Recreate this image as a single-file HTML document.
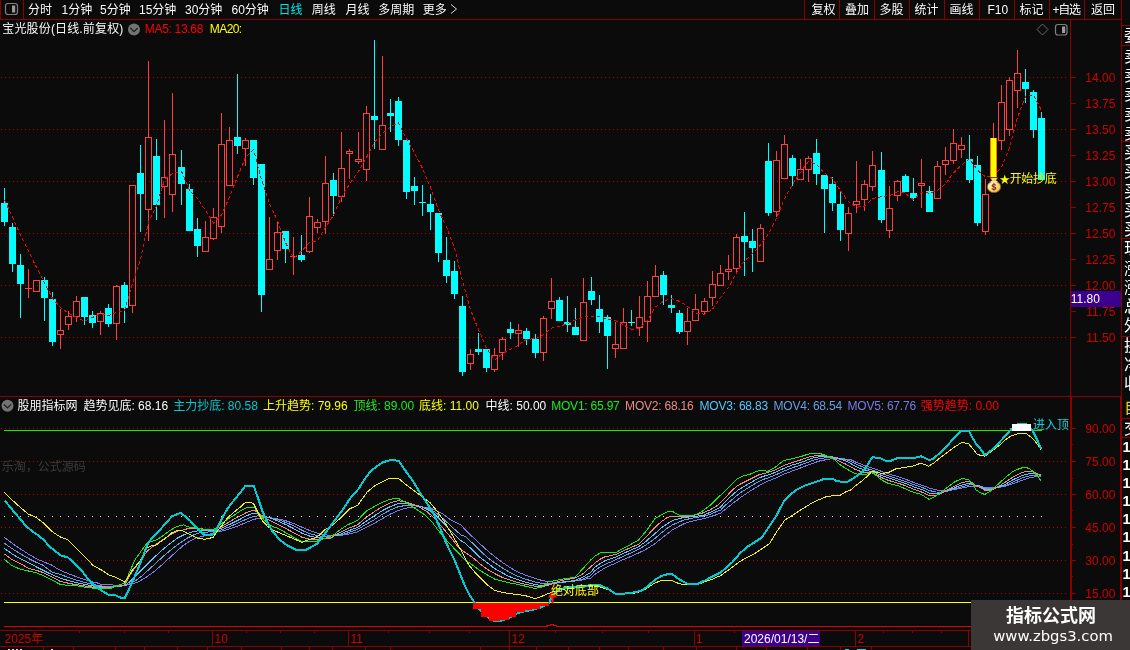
<!DOCTYPE html><html><head><meta charset="utf-8"><title>chart</title>
<style>html,body{margin:0;padding:0;background:#0b0b0b;overflow:hidden}svg{display:block;will-change:transform}text{font-family:"Liberation Sans","Noto Sans CJK SC",sans-serif;white-space:pre}</style></head><body>
<svg width="1130" height="650" viewBox="0 0 1130 650">
<rect width="1130" height="650" fill="#0b0b0b"/>
<g shape-rendering="crispEdges">
<rect x="0" y="0" width="1" height="20" fill="#8c0000"/>
<rect x="23" y="0" width="1" height="20" fill="#8c0000"/>
<rect x="0" y="19" width="1122" height="1" fill="#8c0000"/>
<rect x="804" y="0" width="1" height="20" fill="#8c0000"/>
<rect x="839" y="0" width="1" height="20" fill="#8c0000"/>
<rect x="874" y="0" width="1" height="20" fill="#8c0000"/>
<rect x="909" y="0" width="1" height="20" fill="#8c0000"/>
<rect x="944" y="0" width="1" height="20" fill="#8c0000"/>
<rect x="979" y="0" width="1" height="20" fill="#8c0000"/>
<rect x="1014" y="0" width="1" height="20" fill="#8c0000"/>
<rect x="1049" y="0" width="1" height="20" fill="#8c0000"/>
<rect x="1084" y="0" width="1" height="20" fill="#8c0000"/>
<rect x="1121" y="0" width="1" height="397" fill="#8c0000"/>
<rect x="1120" y="397" width="2" height="253" fill="#8c0000"/>
<rect x="1070" y="20" width="1" height="377" fill="#8c0000"/>
<rect x="1070" y="397" width="2" height="234" fill="#8c0000"/>
<rect x="0" y="396" width="1122" height="1" fill="#8c0000"/>
<rect x="0" y="630" width="1071" height="1" fill="#8c0000"/>
<rect x="0" y="646" width="1122" height="1" fill="#8c0000"/>
<rect x="1121" y="25" width="9" height="1" fill="#8c0000"/>
<rect x="1121" y="45" width="9" height="1" fill="#8c0000"/>
<rect x="1121" y="141" width="9" height="1" fill="#8c0000"/>
<rect x="1121" y="238" width="9" height="1" fill="#8c0000"/>
<rect x="1121" y="336" width="9" height="1" fill="#8c0000"/>
<rect x="1121" y="418" width="9" height="1" fill="#8c0000"/>
<rect x="1121" y="437" width="9" height="1" fill="#8c0000"/>
</g>
<g stroke="#b00000" stroke-width="1" stroke-dasharray="1 3" shape-rendering="crispEdges">
<line x1="1" x2="1067" y1="77.5" y2="77.5"/>
<line x1="1" x2="1067" y1="129.5" y2="129.5"/>
<line x1="1" x2="1067" y1="181.5" y2="181.5"/>
<line x1="1" x2="1067" y1="233.5" y2="233.5"/>
<line x1="1" x2="1067" y1="285.5" y2="285.5"/>
<line x1="1" x2="1067" y1="337.5" y2="337.5"/>
<line x1="1" x2="1067" y1="428.5" y2="428.5"/>
<line x1="1" x2="1067" y1="461.5" y2="461.5"/>
<line x1="1" x2="1067" y1="494.5" y2="494.5"/>
<line x1="1" x2="1067" y1="527.5" y2="527.5"/>
<line x1="1" x2="1067" y1="560.5" y2="560.5"/>
<line x1="1" x2="1067" y1="593.5" y2="593.5"/>
</g>
<g shape-rendering="crispEdges" fill="#e8e8e8"><rect x="4" y="516" width="1" height="1"/><rect x="12" y="516" width="1" height="1"/><rect x="20" y="516" width="1" height="1"/><rect x="28" y="516" width="1" height="1"/><rect x="36" y="516" width="1" height="1"/><rect x="44" y="516" width="1" height="1"/><rect x="52" y="516" width="1" height="1"/><rect x="60" y="516" width="1" height="1"/><rect x="68" y="516" width="1" height="1"/><rect x="76" y="516" width="1" height="1"/><rect x="84" y="516" width="1" height="1"/><rect x="92" y="516" width="1" height="1"/><rect x="100" y="516" width="1" height="1"/><rect x="108" y="516" width="1" height="1"/><rect x="116" y="516" width="1" height="1"/><rect x="124" y="516" width="1" height="1"/><rect x="132" y="516" width="1" height="1"/><rect x="140" y="516" width="1" height="1"/><rect x="148" y="516" width="1" height="1"/><rect x="156" y="516" width="1" height="1"/><rect x="164" y="516" width="1" height="1"/><rect x="172" y="516" width="1" height="1"/><rect x="181" y="516" width="1" height="1"/><rect x="189" y="516" width="1" height="1"/><rect x="197" y="516" width="1" height="1"/><rect x="205" y="516" width="1" height="1"/><rect x="213" y="516" width="1" height="1"/><rect x="221" y="516" width="1" height="1"/><rect x="229" y="516" width="1" height="1"/><rect x="237" y="516" width="1" height="1"/><rect x="245" y="516" width="1" height="1"/><rect x="253" y="516" width="1" height="1"/><rect x="261" y="516" width="1" height="1"/><rect x="269" y="516" width="1" height="1"/><rect x="277" y="516" width="1" height="1"/><rect x="285" y="516" width="1" height="1"/><rect x="293" y="516" width="1" height="1"/><rect x="301" y="516" width="1" height="1"/><rect x="309" y="516" width="1" height="1"/><rect x="317" y="516" width="1" height="1"/><rect x="325" y="516" width="1" height="1"/><rect x="333" y="516" width="1" height="1"/><rect x="341" y="516" width="1" height="1"/><rect x="349" y="516" width="1" height="1"/><rect x="358" y="516" width="1" height="1"/><rect x="366" y="516" width="1" height="1"/><rect x="374" y="516" width="1" height="1"/><rect x="382" y="516" width="1" height="1"/><rect x="390" y="516" width="1" height="1"/><rect x="398" y="516" width="1" height="1"/><rect x="406" y="516" width="1" height="1"/><rect x="414" y="516" width="1" height="1"/><rect x="422" y="516" width="1" height="1"/><rect x="430" y="516" width="1" height="1"/><rect x="438" y="516" width="1" height="1"/><rect x="446" y="516" width="1" height="1"/><rect x="454" y="516" width="1" height="1"/><rect x="462" y="516" width="1" height="1"/><rect x="470" y="516" width="1" height="1"/><rect x="478" y="516" width="1" height="1"/><rect x="486" y="516" width="1" height="1"/><rect x="494" y="516" width="1" height="1"/><rect x="502" y="516" width="1" height="1"/><rect x="510" y="516" width="1" height="1"/><rect x="518" y="516" width="1" height="1"/><rect x="526" y="516" width="1" height="1"/><rect x="535" y="516" width="1" height="1"/><rect x="543" y="516" width="1" height="1"/><rect x="551" y="516" width="1" height="1"/><rect x="559" y="516" width="1" height="1"/><rect x="567" y="516" width="1" height="1"/><rect x="575" y="516" width="1" height="1"/><rect x="583" y="516" width="1" height="1"/><rect x="591" y="516" width="1" height="1"/><rect x="599" y="516" width="1" height="1"/><rect x="607" y="516" width="1" height="1"/><rect x="615" y="516" width="1" height="1"/><rect x="623" y="516" width="1" height="1"/><rect x="631" y="516" width="1" height="1"/><rect x="639" y="516" width="1" height="1"/><rect x="647" y="516" width="1" height="1"/><rect x="655" y="516" width="1" height="1"/><rect x="663" y="516" width="1" height="1"/><rect x="671" y="516" width="1" height="1"/><rect x="679" y="516" width="1" height="1"/><rect x="687" y="516" width="1" height="1"/><rect x="695" y="516" width="1" height="1"/><rect x="704" y="516" width="1" height="1"/><rect x="712" y="516" width="1" height="1"/><rect x="720" y="516" width="1" height="1"/><rect x="728" y="516" width="1" height="1"/><rect x="736" y="516" width="1" height="1"/><rect x="744" y="516" width="1" height="1"/><rect x="752" y="516" width="1" height="1"/><rect x="760" y="516" width="1" height="1"/><rect x="768" y="516" width="1" height="1"/><rect x="776" y="516" width="1" height="1"/><rect x="784" y="516" width="1" height="1"/><rect x="792" y="516" width="1" height="1"/><rect x="800" y="516" width="1" height="1"/><rect x="808" y="516" width="1" height="1"/><rect x="816" y="516" width="1" height="1"/><rect x="824" y="516" width="1" height="1"/><rect x="832" y="516" width="1" height="1"/><rect x="840" y="516" width="1" height="1"/><rect x="848" y="516" width="1" height="1"/><rect x="856" y="516" width="1" height="1"/><rect x="864" y="516" width="1" height="1"/><rect x="872" y="516" width="1" height="1"/><rect x="881" y="516" width="1" height="1"/><rect x="889" y="516" width="1" height="1"/><rect x="897" y="516" width="1" height="1"/><rect x="905" y="516" width="1" height="1"/><rect x="913" y="516" width="1" height="1"/><rect x="921" y="516" width="1" height="1"/><rect x="929" y="516" width="1" height="1"/><rect x="937" y="516" width="1" height="1"/><rect x="945" y="516" width="1" height="1"/><rect x="953" y="516" width="1" height="1"/><rect x="961" y="516" width="1" height="1"/><rect x="969" y="516" width="1" height="1"/><rect x="977" y="516" width="1" height="1"/><rect x="985" y="516" width="1" height="1"/><rect x="993" y="516" width="1" height="1"/><rect x="1001" y="516" width="1" height="1"/><rect x="1009" y="516" width="1" height="1"/><rect x="1017" y="516" width="1" height="1"/><rect x="1025" y="516" width="1" height="1"/><rect x="1033" y="516" width="1" height="1"/><rect x="1041" y="516" width="1" height="1"/></g>
<g shape-rendering="crispEdges">
<rect x="1071" y="77" width="5" height="1" fill="#8c0000"/>
<rect x="1071" y="103" width="5" height="1" fill="#8c0000"/>
<rect x="1071" y="129" width="5" height="1" fill="#8c0000"/>
<rect x="1071" y="155" width="5" height="1" fill="#8c0000"/>
<rect x="1071" y="181" width="5" height="1" fill="#8c0000"/>
<rect x="1071" y="207" width="5" height="1" fill="#8c0000"/>
<rect x="1071" y="233" width="5" height="1" fill="#8c0000"/>
<rect x="1071" y="259" width="5" height="1" fill="#8c0000"/>
<rect x="1071" y="285" width="5" height="1" fill="#8c0000"/>
<rect x="1071" y="311" width="5" height="1" fill="#8c0000"/>
<rect x="1071" y="337" width="5" height="1" fill="#8c0000"/>
</g>
<text x="1115.4" y="81.5" fill="#d00000" font-size="12" text-anchor="end" >14.00</text>
<text x="1115.4" y="107.5" fill="#d00000" font-size="12" text-anchor="end" >13.75</text>
<text x="1115.4" y="133.5" fill="#d00000" font-size="12" text-anchor="end" >13.50</text>
<text x="1115.4" y="159.5" fill="#d00000" font-size="12" text-anchor="end" >13.25</text>
<text x="1115.4" y="185.5" fill="#d00000" font-size="12" text-anchor="end" >13.00</text>
<text x="1115.4" y="211.5" fill="#d00000" font-size="12" text-anchor="end" >12.75</text>
<text x="1115.4" y="237.5" fill="#d00000" font-size="12" text-anchor="end" >12.50</text>
<text x="1115.4" y="263.5" fill="#d00000" font-size="12" text-anchor="end" >12.25</text>
<text x="1115.4" y="289.5" fill="#d00000" font-size="12" text-anchor="end" >12.00</text>
<text x="1115.4" y="315.5" fill="#d00000" font-size="12" text-anchor="end" >11.75</text>
<text x="1115.4" y="341.5" fill="#d00000" font-size="12" text-anchor="end" >11.50</text>
<rect x="1071" y="291" width="50" height="16" fill="#3c0090" shape-rendering="crispEdges"/>
<text x="1070.8" y="303" fill="#ffffff" font-size="12" text-anchor="start" >11.80</text>
<g shape-rendering="crispEdges">
<rect x="1072" y="428" width="4" height="1" fill="#8c0000"/>
<rect x="1072" y="444" width="1" height="1" fill="#8c0000"/>
<rect x="1072" y="461" width="4" height="1" fill="#8c0000"/>
<rect x="1072" y="478" width="1" height="1" fill="#8c0000"/>
<rect x="1072" y="494" width="4" height="1" fill="#8c0000"/>
<rect x="1072" y="510" width="1" height="1" fill="#8c0000"/>
<rect x="1072" y="527" width="4" height="1" fill="#8c0000"/>
<rect x="1072" y="544" width="1" height="1" fill="#8c0000"/>
<rect x="1072" y="560" width="4" height="1" fill="#8c0000"/>
<rect x="1072" y="576" width="1" height="1" fill="#8c0000"/>
<rect x="1072" y="593" width="4" height="1" fill="#8c0000"/>
<rect x="1072" y="610" width="1" height="1" fill="#8c0000"/>
<rect x="1072" y="626" width="4" height="1" fill="#8c0000"/>
</g>
<text x="1115.4" y="432.5" fill="#d00000" font-size="12" text-anchor="end" >90.00</text>
<text x="1115.4" y="465.5" fill="#d00000" font-size="12" text-anchor="end" >75.00</text>
<text x="1115.4" y="498.5" fill="#d00000" font-size="12" text-anchor="end" >60.00</text>
<text x="1115.4" y="531.5" fill="#d00000" font-size="12" text-anchor="end" >45.00</text>
<text x="1115.4" y="564.5" fill="#d00000" font-size="12" text-anchor="end" >30.00</text>
<text x="1115.4" y="597.5" fill="#d00000" font-size="12" text-anchor="end" >15.00</text>
<g shape-rendering="crispEdges">
<rect x="4" y="188" width="1" height="38" fill="#00ffff"/>
<rect x="1" y="203" width="7" height="19" fill="#00ffff"/>
<rect x="12" y="223" width="1" height="49" fill="#00ffff"/>
<rect x="9" y="227" width="7" height="37" fill="#00ffff"/>
<rect x="20" y="254" width="1" height="64" fill="#00ffff"/>
<rect x="17" y="265" width="7" height="19" fill="#00ffff"/>
<rect x="28" y="269" width="1" height="19" fill="#ff4040"/>
<rect x="28" y="289" width="1" height="9" fill="#ff4040"/>
<rect x="25" y="288" width="7" height="1" fill="#ff4040"/>
<rect x="33.5" y="280.5" width="6" height="11" fill="none" stroke="#ff4040" stroke-width="1"/>
<rect x="44" y="277" width="1" height="44" fill="#00ffff"/>
<rect x="41" y="280" width="7" height="18" fill="#00ffff"/>
<rect x="52" y="292" width="1" height="54" fill="#00ffff"/>
<rect x="49" y="299" width="7" height="43" fill="#00ffff"/>
<rect x="60" y="309" width="1" height="21" fill="#ff4040"/>
<rect x="60" y="335" width="1" height="14" fill="#ff4040"/>
<rect x="57.5" y="330.5" width="6" height="4" fill="none" stroke="#ff4040" stroke-width="1"/>
<rect x="68" y="311" width="1" height="5" fill="#ff4040"/>
<rect x="68" y="325" width="1" height="5" fill="#ff4040"/>
<rect x="65.5" y="316.5" width="6" height="8" fill="none" stroke="#ff4040" stroke-width="1"/>
<rect x="76" y="296" width="1" height="5" fill="#ff4040"/>
<rect x="76" y="317" width="1" height="5" fill="#ff4040"/>
<rect x="73.5" y="301.5" width="6" height="15" fill="none" stroke="#ff4040" stroke-width="1"/>
<rect x="84" y="297" width="1" height="28" fill="#00ffff"/>
<rect x="81" y="297" width="7" height="20" fill="#00ffff"/>
<rect x="92" y="311" width="1" height="17" fill="#00ffff"/>
<rect x="89" y="315" width="7" height="8" fill="#00ffff"/>
<rect x="100" y="311" width="1" height="2" fill="#ff4040"/>
<rect x="100" y="322" width="1" height="13" fill="#ff4040"/>
<rect x="97.5" y="313.5" width="6" height="8" fill="none" stroke="#ff4040" stroke-width="1"/>
<rect x="108" y="304" width="1" height="23" fill="#00ffff"/>
<rect x="105" y="308" width="7" height="16" fill="#00ffff"/>
<rect x="116" y="285" width="1" height="1" fill="#ff4040"/>
<rect x="116" y="324" width="1" height="16" fill="#ff4040"/>
<rect x="113.5" y="286.5" width="6" height="37" fill="none" stroke="#ff4040" stroke-width="1"/>
<rect x="124" y="282" width="1" height="41" fill="#00ffff"/>
<rect x="121" y="285" width="7" height="23" fill="#00ffff"/>
<rect x="132" y="306" width="1" height="7" fill="#ff4040"/>
<rect x="129.5" y="185.5" width="6" height="120" fill="none" stroke="#ff4040" stroke-width="1"/>
<rect x="140" y="145" width="1" height="87" fill="#00ffff"/>
<rect x="137" y="173" width="7" height="21" fill="#00ffff"/>
<rect x="148" y="61" width="1" height="76" fill="#ff4040"/>
<rect x="148" y="210" width="1" height="31" fill="#ff4040"/>
<rect x="145.5" y="137.5" width="6" height="72" fill="none" stroke="#ff4040" stroke-width="1"/>
<rect x="156" y="139" width="1" height="81" fill="#00ffff"/>
<rect x="153" y="156" width="7" height="49" fill="#00ffff"/>
<rect x="164" y="120" width="1" height="57" fill="#ff4040"/>
<rect x="164" y="187" width="1" height="31" fill="#ff4040"/>
<rect x="161.5" y="177.5" width="6" height="9" fill="none" stroke="#ff4040" stroke-width="1"/>
<rect x="172" y="93" width="1" height="61" fill="#ff4040"/>
<rect x="172" y="195" width="1" height="17" fill="#ff4040"/>
<rect x="169.5" y="154.5" width="6" height="40" fill="none" stroke="#ff4040" stroke-width="1"/>
<rect x="181" y="150" width="1" height="55" fill="#00ffff"/>
<rect x="178" y="167" width="7" height="17" fill="#00ffff"/>
<rect x="189" y="184" width="1" height="47" fill="#00ffff"/>
<rect x="186" y="189" width="7" height="42" fill="#00ffff"/>
<rect x="197" y="218" width="1" height="39" fill="#00ffff"/>
<rect x="194" y="229" width="7" height="17" fill="#00ffff"/>
<rect x="205" y="221" width="1" height="16" fill="#ff4040"/>
<rect x="202.5" y="237.5" width="6" height="14" fill="none" stroke="#ff4040" stroke-width="1"/>
<rect x="213" y="208" width="1" height="9" fill="#ff4040"/>
<rect x="213" y="239" width="1" height="1" fill="#ff4040"/>
<rect x="210.5" y="217.5" width="6" height="21" fill="none" stroke="#ff4040" stroke-width="1"/>
<rect x="221" y="113" width="1" height="31" fill="#ff4040"/>
<rect x="221" y="227" width="1" height="6" fill="#ff4040"/>
<rect x="218.5" y="144.5" width="6" height="82" fill="none" stroke="#ff4040" stroke-width="1"/>
<rect x="229" y="127" width="1" height="13" fill="#ff4040"/>
<rect x="226.5" y="140.5" width="6" height="45" fill="none" stroke="#ff4040" stroke-width="1"/>
<rect x="237" y="74" width="1" height="80" fill="#00ffff"/>
<rect x="234" y="137" width="7" height="9" fill="#00ffff"/>
<rect x="245" y="138" width="1" height="2" fill="#ff4040"/>
<rect x="245" y="149" width="1" height="17" fill="#ff4040"/>
<rect x="242.5" y="140.5" width="6" height="8" fill="none" stroke="#ff4040" stroke-width="1"/>
<rect x="253" y="140" width="1" height="45" fill="#00ffff"/>
<rect x="250" y="140" width="7" height="38" fill="#00ffff"/>
<rect x="261" y="164" width="1" height="148" fill="#00ffff"/>
<rect x="258" y="164" width="7" height="131" fill="#00ffff"/>
<rect x="269" y="217" width="1" height="42" fill="#ff4040"/>
<rect x="266.5" y="259.5" width="6" height="10" fill="none" stroke="#ff4040" stroke-width="1"/>
<rect x="277" y="222" width="1" height="10" fill="#ff4040"/>
<rect x="277" y="251" width="1" height="9" fill="#ff4040"/>
<rect x="274.5" y="232.5" width="6" height="18" fill="none" stroke="#ff4040" stroke-width="1"/>
<rect x="285" y="231" width="1" height="32" fill="#00ffff"/>
<rect x="282" y="231" width="7" height="18" fill="#00ffff"/>
<rect x="293" y="237" width="1" height="19" fill="#ff4040"/>
<rect x="293" y="257" width="1" height="18" fill="#ff4040"/>
<rect x="290" y="256" width="7" height="1" fill="#ff4040"/>
<rect x="301" y="235" width="1" height="27" fill="#00ffff"/>
<rect x="298" y="255" width="7" height="5" fill="#00ffff"/>
<rect x="309" y="197" width="1" height="19" fill="#ff4040"/>
<rect x="309" y="252" width="1" height="1" fill="#ff4040"/>
<rect x="306.5" y="216.5" width="6" height="35" fill="none" stroke="#ff4040" stroke-width="1"/>
<rect x="317" y="219" width="1" height="3" fill="#ff4040"/>
<rect x="317" y="228" width="1" height="5" fill="#ff4040"/>
<rect x="314.5" y="222.5" width="6" height="5" fill="none" stroke="#ff4040" stroke-width="1"/>
<rect x="325" y="156" width="1" height="27" fill="#ff4040"/>
<rect x="325" y="222" width="1" height="12" fill="#ff4040"/>
<rect x="322.5" y="183.5" width="6" height="38" fill="none" stroke="#ff4040" stroke-width="1"/>
<rect x="333" y="173" width="1" height="43" fill="#00ffff"/>
<rect x="330" y="180" width="7" height="16" fill="#00ffff"/>
<rect x="341" y="132" width="1" height="36" fill="#ff4040"/>
<rect x="341" y="197" width="1" height="5" fill="#ff4040"/>
<rect x="338.5" y="168.5" width="6" height="28" fill="none" stroke="#ff4040" stroke-width="1"/>
<rect x="349" y="149" width="1" height="2" fill="#ff4040"/>
<rect x="349" y="154" width="1" height="25" fill="#ff4040"/>
<rect x="346.5" y="151.5" width="6" height="2" fill="none" stroke="#ff4040" stroke-width="1"/>
<rect x="358" y="132" width="1" height="27" fill="#ff4040"/>
<rect x="358" y="162" width="1" height="2" fill="#ff4040"/>
<rect x="355.5" y="159.5" width="6" height="2" fill="none" stroke="#ff4040" stroke-width="1"/>
<rect x="366" y="106" width="1" height="7" fill="#ff4040"/>
<rect x="366" y="170" width="1" height="11" fill="#ff4040"/>
<rect x="363.5" y="113.5" width="6" height="56" fill="none" stroke="#ff4040" stroke-width="1"/>
<rect x="374" y="40" width="1" height="109" fill="#00ffff"/>
<rect x="371" y="116" width="7" height="4" fill="#00ffff"/>
<rect x="382" y="56" width="1" height="69" fill="#ff4040"/>
<rect x="379.5" y="125.5" width="6" height="24" fill="none" stroke="#ff4040" stroke-width="1"/>
<rect x="390" y="99" width="1" height="33" fill="#00ffff"/>
<rect x="387" y="113" width="7" height="3" fill="#00ffff"/>
<rect x="398" y="97" width="1" height="49" fill="#00ffff"/>
<rect x="395" y="101" width="7" height="39" fill="#00ffff"/>
<rect x="406" y="140" width="1" height="59" fill="#00ffff"/>
<rect x="403" y="140" width="7" height="52" fill="#00ffff"/>
<rect x="414" y="177" width="1" height="28" fill="#00ffff"/>
<rect x="411" y="186" width="7" height="5" fill="#00ffff"/>
<rect x="422" y="185" width="1" height="31" fill="#00ffff"/>
<rect x="419" y="202" width="7" height="1" fill="#00ffff"/>
<rect x="430" y="194" width="1" height="36" fill="#00ffff"/>
<rect x="427" y="204" width="7" height="8" fill="#00ffff"/>
<rect x="438" y="213" width="1" height="49" fill="#00ffff"/>
<rect x="435" y="213" width="7" height="40" fill="#00ffff"/>
<rect x="446" y="237" width="1" height="46" fill="#00ffff"/>
<rect x="443" y="260" width="7" height="16" fill="#00ffff"/>
<rect x="454" y="261" width="1" height="38" fill="#00ffff"/>
<rect x="451" y="271" width="7" height="23" fill="#00ffff"/>
<rect x="462" y="296" width="1" height="80" fill="#00ffff"/>
<rect x="459" y="306" width="7" height="66" fill="#00ffff"/>
<rect x="470" y="349" width="1" height="5" fill="#ff4040"/>
<rect x="470" y="364" width="1" height="6" fill="#ff4040"/>
<rect x="467.5" y="354.5" width="6" height="9" fill="none" stroke="#ff4040" stroke-width="1"/>
<rect x="478" y="333" width="1" height="22" fill="#00ffff"/>
<rect x="475" y="349" width="7" height="3" fill="#00ffff"/>
<rect x="486" y="349" width="1" height="23" fill="#00ffff"/>
<rect x="483" y="349" width="7" height="19" fill="#00ffff"/>
<rect x="494" y="348" width="1" height="7" fill="#ff4040"/>
<rect x="494" y="370" width="1" height="2" fill="#ff4040"/>
<rect x="491.5" y="355.5" width="6" height="14" fill="none" stroke="#ff4040" stroke-width="1"/>
<rect x="502" y="337" width="1" height="2" fill="#ff4040"/>
<rect x="502" y="353" width="1" height="7" fill="#ff4040"/>
<rect x="499.5" y="339.5" width="6" height="13" fill="none" stroke="#ff4040" stroke-width="1"/>
<rect x="510" y="322" width="1" height="17" fill="#00ffff"/>
<rect x="507" y="329" width="7" height="4" fill="#00ffff"/>
<rect x="518" y="324" width="1" height="6" fill="#ff4040"/>
<rect x="518" y="334" width="1" height="13" fill="#ff4040"/>
<rect x="515.5" y="330.5" width="6" height="3" fill="none" stroke="#ff4040" stroke-width="1"/>
<rect x="526" y="328" width="1" height="17" fill="#00ffff"/>
<rect x="523" y="331" width="7" height="8" fill="#00ffff"/>
<rect x="535" y="334" width="1" height="24" fill="#00ffff"/>
<rect x="532" y="339" width="7" height="14" fill="#00ffff"/>
<rect x="543" y="316" width="1" height="2" fill="#ff4040"/>
<rect x="543" y="353" width="1" height="8" fill="#ff4040"/>
<rect x="540.5" y="318.5" width="6" height="34" fill="none" stroke="#ff4040" stroke-width="1"/>
<rect x="551" y="278" width="1" height="23" fill="#ff4040"/>
<rect x="551" y="309" width="1" height="10" fill="#ff4040"/>
<rect x="548.5" y="301.5" width="6" height="7" fill="none" stroke="#ff4040" stroke-width="1"/>
<rect x="559" y="297" width="1" height="24" fill="#00ffff"/>
<rect x="556" y="300" width="7" height="21" fill="#00ffff"/>
<rect x="567" y="296" width="1" height="36" fill="#00ffff"/>
<rect x="564" y="322" width="7" height="3" fill="#00ffff"/>
<rect x="575" y="308" width="1" height="27" fill="#00ffff"/>
<rect x="572" y="327" width="7" height="8" fill="#00ffff"/>
<rect x="583" y="278" width="1" height="24" fill="#ff4040"/>
<rect x="580.5" y="302.5" width="6" height="38" fill="none" stroke="#ff4040" stroke-width="1"/>
<rect x="591" y="277" width="1" height="28" fill="#00ffff"/>
<rect x="588" y="291" width="7" height="9" fill="#00ffff"/>
<rect x="599" y="295" width="1" height="38" fill="#00ffff"/>
<rect x="596" y="309" width="7" height="13" fill="#00ffff"/>
<rect x="607" y="315" width="1" height="54" fill="#00ffff"/>
<rect x="604" y="317" width="7" height="19" fill="#00ffff"/>
<rect x="615" y="322" width="1" height="22" fill="#ff4040"/>
<rect x="615" y="349" width="1" height="9" fill="#ff4040"/>
<rect x="612.5" y="344.5" width="6" height="4" fill="none" stroke="#ff4040" stroke-width="1"/>
<rect x="623" y="308" width="1" height="14" fill="#ff4040"/>
<rect x="620.5" y="322.5" width="6" height="26" fill="none" stroke="#ff4040" stroke-width="1"/>
<rect x="631" y="310" width="1" height="16" fill="#00ffff"/>
<rect x="628" y="322" width="7" height="1" fill="#00ffff"/>
<rect x="639" y="296" width="1" height="21" fill="#ff4040"/>
<rect x="639" y="328" width="1" height="8" fill="#ff4040"/>
<rect x="636.5" y="317.5" width="6" height="10" fill="none" stroke="#ff4040" stroke-width="1"/>
<rect x="647" y="281" width="1" height="15" fill="#ff4040"/>
<rect x="647" y="322" width="1" height="20" fill="#ff4040"/>
<rect x="644.5" y="296.5" width="6" height="25" fill="none" stroke="#ff4040" stroke-width="1"/>
<rect x="655" y="265" width="1" height="11" fill="#ff4040"/>
<rect x="652.5" y="276.5" width="6" height="20" fill="none" stroke="#ff4040" stroke-width="1"/>
<rect x="663" y="271" width="1" height="34" fill="#00ffff"/>
<rect x="660" y="275" width="7" height="20" fill="#00ffff"/>
<rect x="671" y="295" width="1" height="18" fill="#00ffff"/>
<rect x="668" y="305" width="7" height="3" fill="#00ffff"/>
<rect x="679" y="310" width="1" height="24" fill="#00ffff"/>
<rect x="676" y="313" width="7" height="19" fill="#00ffff"/>
<rect x="687" y="308" width="1" height="13" fill="#ff4040"/>
<rect x="687" y="332" width="1" height="13" fill="#ff4040"/>
<rect x="684.5" y="321.5" width="6" height="10" fill="none" stroke="#ff4040" stroke-width="1"/>
<rect x="695" y="294" width="1" height="15" fill="#ff4040"/>
<rect x="692.5" y="309.5" width="6" height="11" fill="none" stroke="#ff4040" stroke-width="1"/>
<rect x="704" y="298" width="1" height="3" fill="#ff4040"/>
<rect x="704" y="312" width="1" height="3" fill="#ff4040"/>
<rect x="701.5" y="301.5" width="6" height="10" fill="none" stroke="#ff4040" stroke-width="1"/>
<rect x="712" y="271" width="1" height="13" fill="#ff4040"/>
<rect x="712" y="298" width="1" height="8" fill="#ff4040"/>
<rect x="709.5" y="284.5" width="6" height="13" fill="none" stroke="#ff4040" stroke-width="1"/>
<rect x="720" y="265" width="1" height="8" fill="#ff4040"/>
<rect x="717.5" y="273.5" width="6" height="12" fill="none" stroke="#ff4040" stroke-width="1"/>
<rect x="728" y="255" width="1" height="14" fill="#ff4040"/>
<rect x="728" y="272" width="1" height="8" fill="#ff4040"/>
<rect x="725.5" y="269.5" width="6" height="2" fill="none" stroke="#ff4040" stroke-width="1"/>
<rect x="736" y="234" width="1" height="3" fill="#ff4040"/>
<rect x="736" y="269" width="1" height="3" fill="#ff4040"/>
<rect x="733.5" y="237.5" width="6" height="31" fill="none" stroke="#ff4040" stroke-width="1"/>
<rect x="744" y="212" width="1" height="64" fill="#00ffff"/>
<rect x="741" y="236" width="7" height="6" fill="#00ffff"/>
<rect x="752" y="229" width="1" height="43" fill="#00ffff"/>
<rect x="749" y="241" width="7" height="7" fill="#00ffff"/>
<rect x="760" y="224" width="1" height="4" fill="#ff4040"/>
<rect x="757.5" y="228.5" width="6" height="33" fill="none" stroke="#ff4040" stroke-width="1"/>
<rect x="768" y="143" width="1" height="73" fill="#00ffff"/>
<rect x="765" y="161" width="7" height="52" fill="#00ffff"/>
<rect x="776" y="151" width="1" height="9" fill="#ff4040"/>
<rect x="776" y="212" width="1" height="5" fill="#ff4040"/>
<rect x="773.5" y="160.5" width="6" height="51" fill="none" stroke="#ff4040" stroke-width="1"/>
<rect x="784" y="135" width="1" height="9" fill="#ff4040"/>
<rect x="781.5" y="144.5" width="6" height="34" fill="none" stroke="#ff4040" stroke-width="1"/>
<rect x="792" y="155" width="1" height="31" fill="#00ffff"/>
<rect x="789" y="158" width="7" height="18" fill="#00ffff"/>
<rect x="800" y="159" width="1" height="10" fill="#ff4040"/>
<rect x="797.5" y="169.5" width="6" height="10" fill="none" stroke="#ff4040" stroke-width="1"/>
<rect x="808" y="156" width="1" height="2" fill="#ff4040"/>
<rect x="808" y="170" width="1" height="12" fill="#ff4040"/>
<rect x="805.5" y="158.5" width="6" height="11" fill="none" stroke="#ff4040" stroke-width="1"/>
<rect x="816" y="139" width="1" height="46" fill="#00ffff"/>
<rect x="813" y="153" width="7" height="21" fill="#00ffff"/>
<rect x="824" y="175" width="1" height="58" fill="#00ffff"/>
<rect x="821" y="175" width="7" height="14" fill="#00ffff"/>
<rect x="832" y="177" width="1" height="34" fill="#00ffff"/>
<rect x="829" y="184" width="7" height="19" fill="#00ffff"/>
<rect x="840" y="192" width="1" height="49" fill="#00ffff"/>
<rect x="837" y="204" width="7" height="26" fill="#00ffff"/>
<rect x="848" y="207" width="1" height="6" fill="#ff4040"/>
<rect x="848" y="234" width="1" height="17" fill="#ff4040"/>
<rect x="845.5" y="213.5" width="6" height="20" fill="none" stroke="#ff4040" stroke-width="1"/>
<rect x="856" y="161" width="1" height="40" fill="#ff4040"/>
<rect x="856" y="205" width="1" height="8" fill="#ff4040"/>
<rect x="853.5" y="201.5" width="6" height="3" fill="none" stroke="#ff4040" stroke-width="1"/>
<rect x="864" y="180" width="1" height="4" fill="#ff4040"/>
<rect x="864" y="200" width="1" height="11" fill="#ff4040"/>
<rect x="861.5" y="184.5" width="6" height="15" fill="none" stroke="#ff4040" stroke-width="1"/>
<rect x="872" y="151" width="1" height="14" fill="#ff4040"/>
<rect x="872" y="187" width="1" height="4" fill="#ff4040"/>
<rect x="869.5" y="165.5" width="6" height="21" fill="none" stroke="#ff4040" stroke-width="1"/>
<rect x="881" y="152" width="1" height="71" fill="#00ffff"/>
<rect x="878" y="170" width="7" height="50" fill="#00ffff"/>
<rect x="889" y="186" width="1" height="22" fill="#ff4040"/>
<rect x="889" y="231" width="1" height="7" fill="#ff4040"/>
<rect x="886.5" y="208.5" width="6" height="22" fill="none" stroke="#ff4040" stroke-width="1"/>
<rect x="897" y="180" width="1" height="1" fill="#ff4040"/>
<rect x="897" y="196" width="1" height="5" fill="#ff4040"/>
<rect x="894.5" y="181.5" width="6" height="14" fill="none" stroke="#ff4040" stroke-width="1"/>
<rect x="905" y="174" width="1" height="18" fill="#00ffff"/>
<rect x="902" y="176" width="7" height="16" fill="#00ffff"/>
<rect x="913" y="178" width="1" height="23" fill="#00ffff"/>
<rect x="910" y="193" width="7" height="5" fill="#00ffff"/>
<rect x="921" y="159" width="1" height="24" fill="#ff4040"/>
<rect x="921" y="186" width="1" height="22" fill="#ff4040"/>
<rect x="918.5" y="183.5" width="6" height="2" fill="none" stroke="#ff4040" stroke-width="1"/>
<rect x="929" y="186" width="1" height="26" fill="#00ffff"/>
<rect x="926" y="191" width="7" height="21" fill="#00ffff"/>
<rect x="937" y="161" width="1" height="5" fill="#ff4040"/>
<rect x="934.5" y="166.5" width="6" height="32" fill="none" stroke="#ff4040" stroke-width="1"/>
<rect x="945" y="147" width="1" height="13" fill="#ff4040"/>
<rect x="945" y="165" width="1" height="10" fill="#ff4040"/>
<rect x="942.5" y="160.5" width="6" height="4" fill="none" stroke="#ff4040" stroke-width="1"/>
<rect x="953" y="129" width="1" height="14" fill="#ff4040"/>
<rect x="953" y="161" width="1" height="3" fill="#ff4040"/>
<rect x="950.5" y="143.5" width="6" height="17" fill="none" stroke="#ff4040" stroke-width="1"/>
<rect x="961" y="137" width="1" height="8" fill="#ff4040"/>
<rect x="961" y="150" width="1" height="8" fill="#ff4040"/>
<rect x="958.5" y="145.5" width="6" height="4" fill="none" stroke="#ff4040" stroke-width="1"/>
<rect x="969" y="135" width="1" height="48" fill="#00ffff"/>
<rect x="966" y="159" width="7" height="21" fill="#00ffff"/>
<rect x="977" y="156" width="1" height="70" fill="#00ffff"/>
<rect x="974" y="165" width="7" height="58" fill="#00ffff"/>
<rect x="985" y="179" width="1" height="15" fill="#ff4040"/>
<rect x="985" y="232" width="1" height="3" fill="#ff4040"/>
<rect x="982.5" y="194.5" width="6" height="37" fill="none" stroke="#ff4040" stroke-width="1"/>
<rect x="993" y="123" width="1" height="15" fill="#ff4040"/>
<rect x="990.5" y="138.5" width="6" height="38" fill="none" stroke="#ff4040" stroke-width="1"/>
<rect x="1001" y="85" width="1" height="17" fill="#ff4040"/>
<rect x="1001" y="141" width="1" height="9" fill="#ff4040"/>
<rect x="998.5" y="102.5" width="6" height="38" fill="none" stroke="#ff4040" stroke-width="1"/>
<rect x="1009" y="77" width="1" height="3" fill="#ff4040"/>
<rect x="1009" y="130" width="1" height="6" fill="#ff4040"/>
<rect x="1006.5" y="80.5" width="6" height="49" fill="none" stroke="#ff4040" stroke-width="1"/>
<rect x="1017" y="50" width="1" height="23" fill="#ff4040"/>
<rect x="1017" y="91" width="1" height="17" fill="#ff4040"/>
<rect x="1014.5" y="73.5" width="6" height="17" fill="none" stroke="#ff4040" stroke-width="1"/>
<rect x="1025" y="69" width="1" height="34" fill="#00ffff"/>
<rect x="1022" y="82" width="7" height="7" fill="#00ffff"/>
<rect x="1033" y="90" width="1" height="48" fill="#00ffff"/>
<rect x="1030" y="92" width="7" height="38" fill="#00ffff"/>
<rect x="1041" y="112" width="1" height="68" fill="#00ffff"/>
<rect x="1038" y="118" width="7" height="62" fill="#00ffff"/>
</g>
<polyline points="4.5,200.0 12.5,217.0 20.5,235.0 28.5,251.0 36.5,267.6 44.5,282.8 52.5,298.4 60.5,307.6 68.5,313.2 76.5,317.4 84.5,321.2 92.5,317.4 100.5,314.0 108.5,315.6 116.5,312.6 124.5,310.8 132.5,283.2 140.5,259.4 148.5,222.0 156.5,205.8 164.5,179.6 172.5,173.4 181.5,171.4 189.5,190.2 197.5,198.4 205.5,210.4 213.5,223.0 221.5,215.0 229.5,196.8 237.5,176.8 245.5,157.4 253.5,149.6 261.5,179.8 269.5,203.6 277.5,220.8 285.5,242.6 293.5,258.2 301.5,251.2 309.5,242.6 317.5,240.6 325.5,227.4 333.5,215.4 341.5,197.0 349.5,184.0 358.5,171.4 366.5,157.4 374.5,142.2 382.5,133.6 390.5,126.6 398.5,122.8 406.5,138.6 414.5,152.8 422.5,168.4 430.5,187.6 438.5,210.2 446.5,227.0 454.5,247.6 462.5,281.4 470.5,309.8 478.5,329.6 486.5,348.0 494.5,360.2 502.5,353.6 510.5,349.4 518.5,345.0 526.5,339.2 535.5,338.8 543.5,334.6 551.5,328.2 559.5,326.4 567.5,323.6 575.5,320.0 583.5,316.8 591.5,316.6 599.5,316.8 607.5,319.0 615.5,320.8 623.5,324.8 631.5,329.4 639.5,328.4 647.5,320.4 655.5,306.8 663.5,301.4 671.5,298.4 679.5,301.4 687.5,306.4 695.5,313.0 704.5,314.2 712.5,309.4 720.5,297.6 728.5,287.2 736.5,272.8 744.5,261.0 752.5,253.8 760.5,244.8 768.5,233.6 776.5,218.2 784.5,198.6 792.5,184.2 800.5,172.4 808.5,161.4 816.5,164.2 824.5,173.2 832.5,178.6 840.5,190.8 848.5,201.8 856.5,207.2 864.5,206.2 872.5,198.6 881.5,196.6 889.5,195.6 897.5,191.6 905.5,193.2 913.5,199.8 921.5,192.4 929.5,193.2 937.5,190.2 945.5,183.8 953.5,172.8 961.5,165.2 969.5,158.8 977.5,170.2 985.5,177.0 993.5,176.0 1001.5,167.4 1009.5,147.4 1017.5,117.4 1025.5,96.4 1033.5,94.8 1041.5,110.4" fill="none" stroke="#ff0000" stroke-width="1" stroke-dasharray="3.5 2.5" shape-rendering="crispEdges"/>
<g shape-rendering="crispEdges"><rect x="990" y="138" width="7" height="39" fill="#ff7800"/><rect x="991" y="138" width="5" height="39" fill="#ffff00"/></g>
<g shape-rendering="crispEdges">
<rect x="4" y="430" width="1038" height="1" fill="#18f000"/>
<rect x="4" y="602" width="1038" height="1" fill="#ffff00"/>
</g>
<polyline points="4.0,626.5 545.0,626.5 549.0,625.5 552.0,624.6 555.0,625.5 558.0,626.5 1070.0,626.5" fill="none" stroke="#e00000" stroke-width="1.3" stroke-linejoin="round" shape-rendering="crispEdges" />
<polyline points="4.4,537.4 12.5,543.6 20.0,548.6 28.7,554.3 37.4,559.2 44.9,562.4 51.2,564.9 60.0,570.2 67.5,573.3 75.0,576.2 82.5,578.9 89.9,581.2 97.4,583.0 102.3,584.8 108.7,584.7 114.9,585.2 122.4,585.5 129.9,584.7 137.4,582.4 144.9,578.0 152.3,573.0 159.8,566.8 167.3,559.9 174.8,553.1 182.3,546.2 189.8,541.2 197.3,537.5 200.8,536.9 205.0,535.5 213.1,533.0 216.8,532.1 222.4,530.9 227.4,529.6 233.7,527.6 239.9,525.2 245.5,522.7 249.9,520.9 254.3,519.3 258.0,518.4 262.4,518.0 267.4,517.8 272.4,518.0 279.8,519.3 287.3,521.2 294.8,523.9 302.3,527.4 309.8,530.5 317.3,533.0 322.3,534.3 330.8,535.5 333.7,535.5 340.0,535.5 347.5,534.3 357.4,531.8 366.2,527.4 374.9,523.0 382.4,518.7 389.9,514.3 398.0,510.6 404.9,508.4 412.3,507.2 419.8,506.8 427.3,507.4 434.8,509.7 442.3,513.7 449.8,519.3 460.8,524.9 465.0,529.4 472.5,536.8 479.9,543.7 487.4,550.6 494.9,556.8 502.4,562.4 509.9,567.4 517.4,571.8 524.9,574.9 534.9,578.4 542.3,580.5 549.8,581.8 557.3,582.4 564.8,581.8 574.8,580.9 582.3,579.9 590.8,578.0 595.0,574.3 600.0,571.1 605.0,568.0 611.2,565.1 616.2,563.0 621.2,560.5 629.9,556.8 638.6,553.0 646.1,549.3 654.9,543.7 661.1,538.7 667.3,533.9 672.3,530.0 678.6,526.5 683.6,524.0 689.8,521.8 696.0,520.2 702.3,519.0 709.8,516.9 717.3,514.4 720.8,513.1 725.0,509.6 732.5,503.6 737.5,499.9 742.4,496.2 749.9,491.2 758.7,485.9 763.7,483.1 767.4,481.4 774.9,478.4 783.6,474.3 792.4,471.0 799.8,468.3 807.3,465.3 813.6,463.1 818.6,461.2 826.0,459.7 832.3,458.7 838.5,458.5 844.8,459.0 850.8,459.7 855.0,461.8 862.5,464.7 869.3,467.2 876.2,469.3 882.4,471.8 888.7,473.9 897.4,476.5 904.9,479.0 913.6,482.4 921.1,484.9 929.2,488.0 936.1,489.9 941.1,490.8 947.3,490.9 954.8,489.6 961.7,488.0 967.9,486.8 972.3,486.1 976.0,486.1 980.8,486.4 984.9,487.4 991.2,488.0 997.4,487.7 1004.9,486.4 1012.4,484.0 1019.9,481.1 1024.9,479.3 1029.8,477.8 1034.8,476.8 1038.6,476.1 1040.8,476.1" fill="none" stroke="#7c78e4" stroke-width="1" stroke-linejoin="round" shape-rendering="crispEdges" />
<polyline points="4.4,543.3 12.5,548.9 20.0,553.6 28.7,558.6 36.2,562.4 42.4,564.9 52.4,572.3 60.0,574.3 67.5,577.2 75.0,579.7 82.5,581.8 89.9,583.7 97.4,585.3 102.3,586.0 108.7,586.4 114.9,586.4 122.4,585.8 127.4,584.9 134.9,581.2 142.4,575.5 149.8,568.7 157.3,561.8 164.8,555.0 172.3,548.7 179.8,543.1 187.3,538.1 194.8,534.4 200.8,532.5 205.0,532.4 213.1,531.4 216.8,530.9 222.4,529.6 227.4,527.6 233.7,524.9 239.9,522.2 245.5,519.5 249.9,517.7 254.3,516.2 258.0,515.9 262.4,516.2 267.4,517.0 272.4,518.0 279.8,520.3 287.3,523.0 294.8,526.4 302.3,530.5 309.8,533.6 317.3,535.5 322.3,536.4 330.8,537.4 333.7,536.1 340.0,535.1 347.5,533.0 357.4,529.6 366.2,524.3 374.9,519.3 382.4,514.3 389.9,510.2 398.0,506.8 404.9,505.6 412.3,505.3 419.8,506.2 427.3,508.1 434.8,511.8 442.3,518.0 449.8,524.9 460.8,534.9 465.0,536.2 472.5,543.1 479.9,550.6 487.4,557.4 494.9,563.0 502.4,568.0 509.9,572.4 517.4,576.2 524.9,578.9 534.9,582.0 542.3,583.4 549.8,583.6 557.3,583.0 564.8,582.1 574.8,581.1 582.3,579.3 590.8,575.5 595.0,570.5 600.0,567.0 605.0,564.3 611.2,561.8 616.2,559.5 621.2,557.2 629.9,553.4 638.6,549.3 646.1,544.9 654.9,538.4 661.1,533.1 667.3,528.1 672.3,525.0 678.6,522.2 683.6,520.2 689.8,518.7 696.0,517.5 702.3,516.5 709.8,514.4 717.3,511.2 720.8,510.0 725.0,505.5 732.5,499.3 737.5,494.9 742.4,491.4 749.9,486.8 758.7,481.4 763.7,479.3 767.4,478.1 774.9,475.2 783.6,471.2 792.4,467.7 799.8,465.3 807.3,462.5 813.6,460.2 818.6,458.7 826.0,457.7 832.3,457.5 838.5,458.1 844.8,459.3 850.8,461.2 855.0,463.7 862.5,466.8 869.3,469.3 876.2,471.4 882.4,473.9 888.7,475.9 897.4,478.7 904.9,481.2 913.6,484.5 921.1,487.0 929.2,490.5 936.1,492.0 941.1,492.1 947.3,491.1 954.8,488.9 961.7,486.8 967.9,485.1 972.3,484.6 976.0,485.5 980.8,486.1 984.9,488.0 991.2,488.6 997.4,487.7 1004.9,485.9 1012.4,482.4 1019.9,478.9 1024.9,477.0 1029.8,475.8 1034.8,475.1 1038.6,474.9 1040.8,475.3" fill="none" stroke="#6c9ce0" stroke-width="1" stroke-linejoin="round" shape-rendering="crispEdges" />
<polyline points="4.4,548.4 12.5,554.3 20.0,558.6 28.7,563.0 33.7,565.5 44.4,571.0 52.4,574.8 60.0,578.0 67.5,580.3 75.0,582.4 82.5,583.9 89.9,585.5 97.4,586.8 102.3,586.8 108.7,587.4 114.9,586.8 122.4,585.9 126.1,584.9 132.4,579.3 139.9,571.8 147.3,564.3 154.8,556.8 162.3,550.0 169.8,543.7 177.3,538.1 184.8,534.4 192.3,531.9 199.8,530.6 205.0,530.1 213.1,530.5 216.8,529.9 222.4,528.0 227.4,525.5 233.7,522.4 239.9,519.3 245.5,516.4 249.9,514.3 254.3,513.0 258.0,513.7 262.4,515.5 267.4,517.0 272.4,518.7 279.8,521.8 287.3,525.3 294.8,529.3 302.3,533.4 309.8,536.1 317.3,537.6 322.3,538.0 330.8,538.4 333.7,536.1 340.0,534.3 347.5,531.1 357.4,527.4 366.2,521.2 374.9,515.5 382.4,510.6 389.9,506.8 398.0,503.7 404.9,503.3 412.3,504.3 419.8,506.2 427.3,509.3 434.8,514.3 442.3,521.8 449.8,529.9 460.8,540.5 465.0,543.1 472.5,549.9 479.9,557.4 487.4,563.0 494.9,568.7 502.4,573.0 509.9,576.8 517.4,579.6 524.9,582.0 534.9,584.6 542.3,585.5 549.8,584.3 557.3,583.0 564.8,581.8 574.8,580.5 582.3,577.4 590.8,572.4 595.0,567.0 600.0,563.6 605.0,560.8 611.2,558.7 616.2,556.8 621.2,554.3 629.9,550.5 638.6,546.8 646.1,541.2 654.9,533.7 661.1,528.1 667.3,523.7 672.3,520.6 678.6,518.7 683.6,517.5 689.8,516.9 696.0,516.2 702.3,515.6 709.8,512.5 717.3,508.7 720.8,506.9 725.0,501.8 732.5,494.9 737.5,490.5 742.4,487.4 749.9,483.1 758.7,478.1 763.7,476.2 767.4,475.3 774.9,472.5 783.6,468.5 792.4,465.0 799.8,462.8 807.3,460.0 813.6,457.9 818.6,456.9 826.0,456.2 832.3,456.9 838.5,458.7 844.8,460.6 850.8,463.5 855.0,466.2 862.5,469.3 869.3,471.2 876.2,473.0 882.4,475.9 888.7,478.0 897.4,480.8 904.9,483.3 913.6,486.8 921.1,489.3 929.2,493.0 936.1,493.9 941.1,493.0 947.3,490.9 954.8,487.6 961.7,485.1 967.9,483.4 972.3,483.6 976.0,485.3 980.8,486.1 984.9,489.2 991.2,489.6 997.4,487.7 1004.9,484.6 1012.4,480.1 1019.9,476.4 1024.9,474.6 1029.8,473.6 1034.8,473.6 1038.6,474.3 1040.8,475.1" fill="none" stroke="#5cc4ff" stroke-width="1" stroke-linejoin="round" shape-rendering="crispEdges" />
<polyline points="4.4,554.0 12.5,559.9 20.0,563.6 23.7,565.5 28.5,568.5 36.4,570.3 44.4,573.0 52.4,577.3 60.0,581.2 67.5,583.0 75.0,584.5 82.5,585.5 89.9,586.8 97.4,587.6 102.3,587.3 108.7,588.0 114.9,586.8 122.4,585.3 124.9,584.9 129.9,574.9 134.9,568.1 141.1,559.3 147.3,551.2 152.3,546.8 159.8,541.9 167.3,536.9 172.3,533.7 177.3,531.2 182.3,530.2 190.0,528.0 197.5,528.4 205.0,529.3 213.1,529.9 216.8,528.6 222.4,526.2 227.4,523.0 233.7,519.3 239.9,516.2 245.5,513.0 249.9,511.2 254.3,510.2 258.0,513.0 262.4,516.8 267.4,519.3 272.4,521.8 279.8,525.5 287.3,529.3 294.8,533.4 302.3,537.4 309.8,539.3 317.3,539.3 322.3,538.4 330.8,538.0 333.7,536.1 340.0,532.4 347.5,528.6 357.4,524.9 366.2,517.4 374.9,511.2 382.4,506.8 389.9,503.1 398.0,500.6 404.9,501.8 412.3,504.3 419.8,507.4 427.3,511.8 434.8,518.7 442.3,527.4 449.8,536.1 458.5,547.4 465.0,552.4 472.5,557.4 479.9,563.7 487.4,569.3 494.9,573.7 502.4,577.4 509.9,579.9 517.4,582.4 524.9,584.3 534.9,586.1 542.3,586.8 549.8,584.9 557.3,581.8 564.8,579.9 574.8,578.0 582.3,574.3 590.8,566.8 595.0,563.0 600.0,559.3 605.0,556.8 611.2,555.5 616.2,554.3 621.2,551.8 629.9,548.0 638.6,544.3 646.1,536.8 654.9,527.5 661.1,521.8 667.3,517.5 672.3,516.2 678.6,516.2 683.6,516.2 689.8,516.2 696.0,514.7 702.3,513.1 709.8,510.0 717.3,505.6 725.0,498.0 732.5,489.9 737.5,485.6 742.4,483.1 749.9,479.3 758.7,474.9 763.7,473.5 767.4,472.7 774.9,470.0 783.6,465.6 792.4,462.5 799.8,460.3 807.3,457.5 813.6,456.0 818.6,455.4 826.0,455.6 832.3,457.5 838.5,460.6 844.8,463.7 850.8,466.8 855.0,469.3 862.5,472.2 869.3,472.4 872.4,473.0 876.2,474.9 882.4,478.0 888.7,480.5 897.4,483.0 904.9,485.5 913.6,489.3 921.1,491.8 929.2,495.5 936.1,495.5 941.1,493.6 947.3,489.9 954.8,486.1 961.7,482.6 967.9,481.4 972.3,482.6 976.0,486.1 980.8,487.4 984.9,490.7 991.2,490.2 997.4,487.1 1004.9,482.4 1012.4,477.4 1019.9,473.4 1024.9,471.8 1029.8,471.4 1034.8,472.4 1038.6,474.6 1040.8,476.1" fill="none" stroke="#f08888" stroke-width="1" stroke-linejoin="round" shape-rendering="crispEdges" />
<polyline points="4.4,559.2 8.7,563.0 11.9,565.5 20.5,569.3 28.5,571.0 36.4,572.8 44.4,576.0 52.4,580.3 60.0,584.3 67.5,585.3 75.0,585.5 82.5,586.8 89.9,587.8 97.4,588.6 102.3,588.5 108.7,589.0 114.9,586.8 122.4,583.9 124.9,583.7 129.9,571.2 134.9,559.9 141.1,551.2 147.3,542.5 152.3,541.2 157.3,539.4 162.3,536.2 169.8,530.6 175.9,526.9 183.4,524.9 190.0,527.4 197.5,528.0 205.0,529.9 213.1,529.9 216.8,527.4 222.4,523.0 227.4,519.3 233.7,515.5 239.9,511.2 245.5,508.1 249.9,507.2 254.3,507.2 258.0,512.4 262.4,518.0 267.4,523.7 272.4,526.2 279.8,529.3 287.3,533.6 294.8,538.0 302.3,541.7 309.8,541.7 317.3,541.1 322.3,539.3 330.8,536.1 333.7,534.9 340.0,529.9 347.5,524.9 357.4,520.5 366.2,511.2 374.9,506.2 382.4,502.4 389.9,499.3 398.0,498.1 402.4,500.6 409.8,504.9 417.3,509.9 424.8,514.9 432.3,522.4 439.8,532.4 447.3,541.1 456.0,550.5 465.0,559.9 472.5,564.9 479.9,570.5 487.4,574.9 494.9,579.3 502.4,581.1 509.9,583.0 517.4,584.3 524.9,586.1 534.9,588.4 541.1,587.4 548.6,581.8 556.1,580.5 564.8,578.6 574.8,577.4 582.3,569.3 590.8,559.9 595.0,556.2 600.0,553.0 605.0,552.2 611.2,552.2 615.6,553.0 621.2,549.3 629.9,544.9 638.6,539.9 646.1,531.2 654.9,518.7 661.1,515.0 667.3,511.9 672.3,511.2 678.6,515.0 683.6,515.6 689.8,516.0 696.0,514.4 702.3,511.2 709.8,505.6 717.5,498.0 725.0,491.2 732.5,483.7 737.5,478.7 742.4,476.2 749.9,474.3 758.7,470.6 763.7,470.3 767.4,471.6 774.9,467.5 783.6,460.6 792.4,458.7 799.8,456.9 807.3,454.4 813.6,453.1 818.6,453.1 823.6,454.7 829.8,456.9 834.8,460.0 841.0,465.6 847.3,469.3 850.8,471.5 855.0,473.7 862.5,474.7 869.3,473.7 871.8,471.8 876.2,475.5 882.4,480.5 888.7,483.6 897.4,485.5 904.9,488.6 913.6,492.4 921.1,494.3 929.2,499.5 934.8,496.7 941.1,492.4 947.3,487.4 954.8,481.8 961.7,478.7 967.9,479.3 972.3,483.0 976.0,489.9 980.8,493.0 984.9,494.5 991.2,490.5 997.4,484.9 1004.9,478.0 1012.4,471.8 1019.9,468.4 1024.9,467.2 1029.8,468.7 1034.8,473.0 1038.6,477.4 1040.8,480.9" fill="none" stroke="#10f010" stroke-width="1" stroke-linejoin="round" shape-rendering="crispEdges" />
<polyline points="4.4,492.2 10.0,498.1 16.2,503.7 22.5,509.3 28.7,514.3 36.2,517.4 43.7,523.1 52.4,531.8 59.9,536.8 68.0,539.9 72.4,544.3 79.9,551.8 87.3,559.2 93.0,565.5 101.2,569.9 108.7,574.9 114.9,576.8 122.4,580.5 124.9,582.2 127.4,578.0 132.4,569.9 139.9,561.2 144.9,551.8 147.3,547.5 152.3,545.6 156.1,545.0 164.8,538.7 172.3,532.5 177.3,530.6 182.3,530.6 189.8,534.4 197.3,538.1 205.0,539.3 213.1,537.4 216.8,531.8 222.4,524.9 227.4,518.0 233.7,512.4 239.9,507.4 245.5,502.4 249.9,502.4 253.6,503.7 257.4,511.2 261.7,519.9 267.4,526.2 272.4,529.9 279.8,533.0 287.3,536.1 294.8,539.3 302.3,542.4 306.0,540.5 314.8,538.0 319.8,534.9 324.8,529.9 330.8,526.2 335.0,523.0 342.5,516.2 349.9,508.7 357.4,505.6 362.4,498.7 367.4,491.8 374.9,485.6 382.4,481.9 389.9,478.1 398.0,478.1 407.3,485.6 414.8,491.2 422.3,496.8 429.8,502.4 437.3,511.2 444.8,522.4 452.3,534.9 460.8,549.9 468.7,564.9 475.0,572.4 481.2,578.6 487.4,584.9 494.9,590.5 502.4,592.4 509.9,593.6 517.4,594.5 524.9,595.5 534.9,598.6 542.3,596.1 549.8,593.0 558.7,590.3 567.5,588.5 576.2,587.8 584.9,586.5 593.7,586.0 599.9,586.8 607.4,589.3 614.9,593.5 624.9,594.0 634.8,593.0 642.3,591.0 651.1,585.5 654.9,583.0 661.1,580.7 672.3,580.5 678.6,583.6 687.3,584.9 698.5,584.2 704.8,581.7 712.3,579.2 720.8,575.5 732.2,567.3 739.7,561.6 747.1,557.3 754.6,553.6 762.1,548.6 769.6,543.6 777.1,531.1 781.1,525.5 784.9,519.9 792.4,515.5 799.8,510.5 809.8,504.3 818.6,499.9 826.0,496.8 833.5,495.5 839.8,495.5 846.0,491.8 850.8,489.9 855.0,486.1 862.5,480.5 868.7,474.9 871.8,471.2 876.2,472.4 882.4,473.4 888.7,472.4 896.2,468.7 904.9,467.4 912.4,466.2 921.1,463.1 928.6,466.2 933.6,463.1 939.8,458.1 947.3,452.5 954.8,446.8 961.7,442.5 968.5,443.7 972.3,448.1 976.6,453.7 980.8,455.6 984.9,456.2 992.4,450.6 999.9,444.9 1006.1,439.3 1011.1,436.0 1018.6,433.5 1026.1,433.5 1032.3,438.1 1036.1,442.5 1041.1,449.7" fill="none" stroke="#f0f020" stroke-width="1" stroke-linejoin="round" shape-rendering="crispEdges" />
<polyline points="4.7,500.6 10.0,506.8 15.0,513.1 20.0,518.7 25.0,524.9 31.2,530.5 37.4,534.9 43.7,539.9 49.9,546.8 56.2,551.8 61.1,555.5 68.0,557.6 72.4,561.1 76.7,565.5 82.5,571.8 88.7,579.9 93.7,584.9 101.2,590.5 108.7,594.9 114.9,595.1 122.4,598.4 124.9,598.0 129.9,587.4 134.9,576.2 141.1,561.2 147.3,545.0 152.3,537.5 159.8,530.0 172.2,516.1 180.9,512.9 190.0,520.5 195.0,526.2 202.5,533.6 206.2,535.5 212.5,534.9 216.2,529.9 221.2,519.9 227.4,508.7 233.7,500.6 239.9,493.1 245.5,485.6 253.6,485.6 257.4,496.2 262.4,511.2 267.4,522.4 272.4,531.1 279.8,539.9 287.3,545.5 296.1,549.9 306.0,549.9 317.3,543.6 324.8,533.6 330.8,525.5 335.0,519.9 342.5,509.9 349.9,498.7 358.7,488.7 364.9,478.7 371.2,470.6 382.3,462.5 390.5,460.0 398.5,460.7 404.9,470.0 412.3,480.0 419.8,492.5 427.3,503.7 434.8,516.2 439.8,527.4 444.8,539.9 449.8,550.5 455.0,561.2 460.0,573.7 465.0,586.1 470.0,596.1 473.7,601.1 480.0,610.0 488.0,617.0 494.0,621.0 502.0,620.5 510.0,617.5 518.0,613.0 526.0,611.0 534.0,609.5 542.0,607.0 549.0,603.0 552.5,594.7 558.7,589.8 567.5,587.3 576.2,586.8 584.9,586.0 593.7,584.8 599.9,585.3 607.4,588.5 614.9,593.5 624.9,593.5 634.8,592.3 642.3,590.3 648.6,585.5 654.9,579.9 661.1,576.1 667.3,574.3 671.7,573.9 677.3,578.0 682.3,581.1 687.3,583.6 698.5,583.6 704.8,580.5 712.3,576.7 720.8,572.4 732.2,562.3 739.7,553.6 747.1,546.8 754.6,542.3 762.1,537.3 769.9,525.5 776.1,516.1 783.6,501.8 789.9,494.9 797.3,489.3 804.8,485.6 812.3,483.1 819.8,480.6 824.8,478.7 832.3,478.7 837.3,481.4 847.3,481.8 850.8,479.9 853.7,478.0 860.0,473.7 865.0,468.7 872.4,457.2 879.9,458.1 886.8,461.2 891.2,460.6 897.4,458.1 904.9,457.7 914.9,457.7 921.1,456.2 928.6,459.9 932.3,459.3 939.8,453.1 946.1,446.8 952.3,440.0 957.3,434.4 961.7,430.6 969.1,431.2 972.3,437.5 976.0,443.7 980.8,449.3 984.9,455.2 992.4,449.3 999.9,441.8 1006.1,435.0 1011.1,429.3 1018.6,423.5 1026.1,423.5 1032.3,430.0 1036.1,437.5 1041.1,448.7" fill="none" stroke="#00ccd2" stroke-width="2" stroke-linejoin="round" shape-rendering="crispEdges" />
<g shape-rendering="crispEdges">
<rect x="473" y="603" width="8" height="6" fill="#ff0000"/>
<rect x="481" y="603" width="8" height="14" fill="#ff0000"/>
<rect x="489" y="603" width="11" height="18" fill="#ff0000"/>
<rect x="500" y="603" width="9" height="17" fill="#ff0000"/>
<rect x="509" y="603" width="7" height="14" fill="#ff0000"/>
<rect x="516" y="603" width="9" height="9" fill="#ff0000"/>
<rect x="525" y="603" width="7" height="7" fill="#ff0000"/>
<rect x="532" y="603" width="8" height="6" fill="#ff0000"/>
<rect x="540" y="603" width="9" height="3" fill="#ff0000"/>
</g>
<path d="M552.5 591 L557 597.5 L553.5 597.5 L553.5 603.5 L551.5 603.5 L551.5 597.5 L548 597.5 Z" fill="#ff1010"/>
<text x="551" y="595" fill="#ffff00" font-size="12" text-anchor="start" >绝对底部</text>
<rect x="1012" y="424" width="19" height="7" fill="#ffffff" shape-rendering="crispEdges"/>
<text x="1033" y="429" fill="#10d0d8" font-size="12" text-anchor="start" >进入顶</text>
<text x="999.6" y="182.6" fill="#ffff00" font-size="10.5" text-anchor="start" >★</text>
<text x="1009.7" y="183" fill="#ffff00" font-size="12" text-anchor="start"  textLength="47" lengthAdjust="spacing">开始抄底</text>
<defs><radialGradient id="mb" cx="0.38" cy="0.4" r="0.7"><stop offset="0" stop-color="#fffbe0"/><stop offset="0.45" stop-color="#ffe87c"/><stop offset="1" stop-color="#e8b040"/></radialGradient></defs>
<g transform="translate(994,185)"><path d="M-3.6 -7.3 L3.6 -7.3 L1.6 -3.4 L-1.6 -3.4 Z" fill="#ffe27a" stroke="#a86818" stroke-width="0.5"/><ellipse cx="0" cy="1.9" rx="6.7" ry="5.7" fill="url(#mb)" stroke="#9a5a18" stroke-width="0.8"/><path d="M-3.4 -3.4 L3.4 -3.4" stroke="#f8f0e0" stroke-width="1"/><text x="0" y="5.4" font-size="9.5" font-weight="bold" text-anchor="middle" fill="#8c2c24">$</text><path d="M0 -2.2 L0 6" stroke="#8c2c24" stroke-width="0.7"/></g>
<rect x="5.5" y="3.5" width="12" height="11" rx="2.5" fill="none" stroke="#808080" stroke-width="1.2"/><rect x="12" y="5.5" width="3.2" height="7" fill="#9a9a9a"/>
<text x="28" y="13.5" fill="#fafafa" font-size="12" text-anchor="start"  font-weight="400">分时</text>
<text x="61.5" y="13.5" fill="#fafafa" font-size="12" text-anchor="start"  font-weight="400">1分钟</text>
<text x="100" y="13.5" fill="#fafafa" font-size="12" text-anchor="start"  font-weight="400">5分钟</text>
<text x="139" y="13.5" fill="#fafafa" font-size="12" text-anchor="start"  font-weight="400">15分钟</text>
<text x="185" y="13.5" fill="#fafafa" font-size="12" text-anchor="start"  font-weight="400">30分钟</text>
<text x="231.5" y="13.5" fill="#fafafa" font-size="12" text-anchor="start"  font-weight="400">60分钟</text>
<text x="278.5" y="13.5" fill="#00e6e6" font-size="12" text-anchor="start" >日线</text>
<text x="311.7" y="13.5" fill="#fafafa" font-size="12" text-anchor="start"  font-weight="400">周线</text>
<text x="345.5" y="13.5" fill="#fafafa" font-size="12" text-anchor="start"  font-weight="400">月线</text>
<text x="378.3" y="13.5" fill="#fafafa" font-size="12" text-anchor="start"  font-weight="400">多周期</text>
<text x="422.7" y="13.5" fill="#fafafa" font-size="12" text-anchor="start"  font-weight="400">更多</text>
<path d="M451 4.5 L456.5 9 L451 13.5" fill="none" stroke="#d8d8d8" stroke-width="1"/>
<text x="811.5" y="13.5" fill="#fafafa" font-size="12" text-anchor="start"  font-weight="400">复权</text>
<text x="845" y="13.5" fill="#fafafa" font-size="12" text-anchor="start"  font-weight="400">叠加</text>
<text x="879.5" y="13.5" fill="#fafafa" font-size="12" text-anchor="start"  font-weight="400">多股</text>
<text x="914.5" y="13.5" fill="#fafafa" font-size="12" text-anchor="start"  font-weight="400">统计</text>
<text x="949.5" y="13.5" fill="#fafafa" font-size="12" text-anchor="start"  font-weight="400">画线</text>
<text x="987.5" y="13.5" fill="#fafafa" font-size="12" text-anchor="start"  font-weight="400">F10</text>
<text x="1019.5" y="13.5" fill="#fafafa" font-size="12" text-anchor="start"  font-weight="400">标记</text>
<text x="1052.5" y="13.5" fill="#fafafa" font-size="12" text-anchor="start"  textLength="28.5" lengthAdjust="spacing" font-weight="400">+自选</text>
<text x="1091" y="13.5" fill="#fafafa" font-size="12" text-anchor="start"  font-weight="400">返回</text>
<text x="2.3" y="32.8" fill="#fafafa" font-size="12" text-anchor="start"  textLength="121" lengthAdjust="spacing" font-weight="400">宝光股份(日线.前复权)</text>
<circle cx="134" cy="29.4" r="6" fill="#737373"/><path d="M130.4 28 L134 31.6 L137.6 28" fill="none" stroke="#1c1c1c" stroke-width="1.15"/>
<text x="144.8" y="32.7" fill="#ff0000" font-size="12" text-anchor="start"  textLength="58.6" lengthAdjust="spacing">MA5: 13.68</text>
<text x="209.8" y="32.7" fill="#ffff00" font-size="12" text-anchor="start"  textLength="32.4" lengthAdjust="spacing">MA20:</text>
<path d="M1042.5 24 L1048 29.5 L1042.5 35 L1037 29.5 Z" fill="none" stroke="#6a6a6a" stroke-width="1"/>
<rect x="1055.5" y="24.5" width="11.5" height="10.5" rx="2.5" fill="none" stroke="#808080" stroke-width="1.2"/><rect x="1062" y="26.5" width="3.2" height="6.5" fill="#9a9a9a"/>
<circle cx="7.5" cy="405.8" r="6" fill="#737373"/><path d="M3.9 404.3 L7.5 407.9 L11.1 404.3" fill="none" stroke="#1c1c1c" stroke-width="1.15"/>
<text x="17.5" y="410.1" fill="#fafafa" font-size="12" text-anchor="start"  font-weight="400">股朋指标网</text>
<text x="83.4" y="410.1" fill="#fafafa" font-size="12" text-anchor="start"  font-weight="400">趋势见底: 68.16</text>
<text x="173.2" y="410.1" fill="#00c8d0" font-size="12" text-anchor="start" >主力抄底: 80.58</text>
<text x="263" y="410.1" fill="#ffff00" font-size="12" text-anchor="start" >上升趋势: 79.96</text>
<text x="353.4" y="410.1" fill="#20e820" font-size="12" text-anchor="start" >顶线: 89.00</text>
<text x="419" y="410.1" fill="#ffff00" font-size="12" text-anchor="start" >底线: 11.00</text>
<text x="485.6" y="410.1" fill="#fafafa" font-size="12" text-anchor="start"  font-weight="400">中线: 50.00</text>
<text x="551.2" y="410.1" fill="#20e820" font-size="12" text-anchor="start"  textLength="68.6" lengthAdjust="spacing">MOV1: 65.97</text>
<text x="625.1" y="410.1" fill="#f08888" font-size="12" text-anchor="start"  textLength="68.6" lengthAdjust="spacing">MOV2: 68.16</text>
<text x="699.5" y="410.1" fill="#5cc4ff" font-size="12" text-anchor="start"  textLength="68.6" lengthAdjust="spacing">MOV3: 68.83</text>
<text x="773.5" y="410.1" fill="#6c9ce0" font-size="12" text-anchor="start"  textLength="68.6" lengthAdjust="spacing">MOV4: 68.54</text>
<text x="847.5" y="410.1" fill="#7c78e4" font-size="12" text-anchor="start"  textLength="68.6" lengthAdjust="spacing">MOV5: 67.76</text>
<text x="920.8" y="410.1" fill="#ff0000" font-size="12" text-anchor="start" >强势趋势: 0.00</text>
<text x="1.7" y="471" fill="#3c3c3c" font-size="12" text-anchor="start" >乐淘，公式源码</text>
<g shape-rendering="crispEdges">
<rect x="79" y="630" width="1" height="3" fill="#8c0000"/>
<rect x="124" y="630" width="1" height="3" fill="#8c0000"/>
<rect x="168" y="630" width="1" height="3" fill="#8c0000"/>
<rect x="246" y="630" width="1" height="3" fill="#8c0000"/>
<rect x="280" y="630" width="1" height="3" fill="#8c0000"/>
<rect x="314" y="630" width="1" height="3" fill="#8c0000"/>
<rect x="388" y="630" width="1" height="3" fill="#8c0000"/>
<rect x="429" y="630" width="1" height="3" fill="#8c0000"/>
<rect x="469" y="630" width="1" height="3" fill="#8c0000"/>
<rect x="555" y="630" width="1" height="3" fill="#8c0000"/>
<rect x="602" y="630" width="1" height="3" fill="#8c0000"/>
<rect x="648" y="630" width="1" height="3" fill="#8c0000"/>
<rect x="734" y="630" width="1" height="3" fill="#8c0000"/>
<rect x="883" y="630" width="1" height="3" fill="#8c0000"/>
<rect x="912" y="630" width="1" height="3" fill="#8c0000"/>
<rect x="941" y="630" width="1" height="3" fill="#8c0000"/>
<rect x="212" y="630" width="1" height="16" fill="#8c0000"/>
<rect x="348" y="630" width="1" height="16" fill="#8c0000"/>
<rect x="509" y="630" width="1" height="16" fill="#8c0000"/>
<rect x="694" y="630" width="1" height="16" fill="#8c0000"/>
<rect x="855" y="630" width="1" height="16" fill="#8c0000"/>
<rect x="968" y="630" width="1" height="16" fill="#8c0000"/>
</g>
<text x="4.5" y="643" fill="#d00000" font-size="12" text-anchor="start" >2025年</text>
<text x="214.5" y="643" fill="#d00000" font-size="12" text-anchor="start" >10</text>
<text x="350.5" y="643" fill="#d00000" font-size="12" text-anchor="start" >11</text>
<text x="511.5" y="643" fill="#d00000" font-size="12" text-anchor="start" >12</text>
<text x="696" y="643" fill="#d00000" font-size="12" text-anchor="start" >1</text>
<text x="857.5" y="643" fill="#d00000" font-size="12" text-anchor="start" >2</text>
<text x="970.3" y="643" fill="#d00000" font-size="12" text-anchor="start" >3</text>
<rect x="742" y="631" width="78" height="15" fill="#3c0090" shape-rendering="crispEdges"/>
<text x="744" y="642.7" fill="#ffffff" font-size="12" text-anchor="start" >2026/01/13/二</text>
<g shape-rendering="crispEdges">
<rect x="43" y="647" width="1" height="3" fill="#8c0000"/>
<rect x="73" y="647" width="1" height="3" fill="#8c0000"/>
<rect x="115" y="647" width="1" height="3" fill="#8c0000"/>
<rect x="144" y="647" width="1" height="3" fill="#8c0000"/>
<rect x="177" y="647" width="1" height="3" fill="#8c0000"/>
<rect x="207" y="647" width="1" height="3" fill="#8c0000"/>
<rect x="241" y="647" width="1" height="3" fill="#8c0000"/>
<rect x="281" y="647" width="1" height="3" fill="#8c0000"/>
<rect x="309" y="647" width="1" height="3" fill="#8c0000"/>
<rect x="332" y="647" width="1" height="3" fill="#8c0000"/>
<rect x="365" y="647" width="1" height="3" fill="#8c0000"/>
<rect x="390" y="647" width="1" height="3" fill="#8c0000"/>
<rect x="480" y="647" width="1" height="3" fill="#8c0000"/>
<rect x="509" y="647" width="1" height="3" fill="#8c0000"/>
<rect x="536" y="647" width="1" height="3" fill="#8c0000"/>
<rect x="568" y="647" width="1" height="3" fill="#8c0000"/>
<rect x="599" y="647" width="1" height="3" fill="#8c0000"/>
<rect x="628" y="647" width="1" height="3" fill="#8c0000"/>
<rect x="663" y="647" width="1" height="3" fill="#8c0000"/>
<rect x="696" y="647" width="1" height="3" fill="#8c0000"/>
<rect x="736" y="647" width="1" height="3" fill="#8c0000"/>
<rect x="766" y="647" width="1" height="3" fill="#8c0000"/>
<rect x="807" y="647" width="1" height="3" fill="#8c0000"/>
<rect x="840" y="647" width="1" height="3" fill="#8c0000"/>
<rect x="871" y="647" width="1" height="3" fill="#8c0000"/>
<rect x="8" y="649" width="2" height="1" fill="#e0e0e0"/><rect x="12" y="649" width="2" height="1" fill="#e0e0e0"/><rect x="16" y="649" width="2" height="1" fill="#e0e0e0"/><rect x="20" y="649" width="2" height="1" fill="#e0e0e0"/><rect x="51" y="649" width="2" height="1" fill="#e0e0e0"/><rect x="845" y="649" width="4" height="1" fill="#00e0e0"/><rect x="857" y="649" width="9" height="1" fill="#00e0e0"/>
</g>
<clipPath id="rc"><rect x="1122" y="20" width="8" height="630"/></clipPath><g clip-path="url(#rc)">
<text x="1124" y="41.0" fill="#ffffff" font-size="16" text-anchor="start" >委</text>
<text x="1124" y="61.75" fill="#ffffff" font-size="16" text-anchor="start" >卖</text>
<text x="1124" y="81.0" fill="#ffffff" font-size="16" text-anchor="start" >卖</text>
<text x="1124" y="100.25" fill="#ffffff" font-size="16" text-anchor="start" >卖</text>
<text x="1124" y="119.5" fill="#ffffff" font-size="16" text-anchor="start" >卖</text>
<text x="1124" y="138.75" fill="#ffffff" font-size="16" text-anchor="start" >卖</text>
<text x="1124" y="158.0" fill="#ffffff" font-size="16" text-anchor="start" >买</text>
<text x="1124" y="177.25" fill="#ffffff" font-size="16" text-anchor="start" >买</text>
<text x="1124" y="196.5" fill="#ffffff" font-size="16" text-anchor="start" >买</text>
<text x="1124" y="215.75" fill="#ffffff" font-size="16" text-anchor="start" >买</text>
<text x="1124" y="235.0" fill="#ffffff" font-size="16" text-anchor="start" >买</text>
<text x="1124" y="254.25" fill="#ffffff" font-size="16" text-anchor="start" >现</text>
<text x="1124" y="273.5" fill="#ffffff" font-size="16" text-anchor="start" >涨</text>
<text x="1124" y="292.75" fill="#ffffff" font-size="16" text-anchor="start" >涨</text>
<text x="1124" y="312.0" fill="#ffffff" font-size="16" text-anchor="start" >总</text>
<text x="1124" y="331.25" fill="#ffffff" font-size="16" text-anchor="start" >外</text>
<text x="1124" y="350.5" fill="#ffffff" font-size="16" text-anchor="start" >换</text>
<text x="1124" y="369.75" fill="#ffffff" font-size="16" text-anchor="start" >净</text>
<text x="1124" y="389.0" fill="#ffffff" font-size="16" text-anchor="start" >收</text>
<text x="1124" y="413" fill="#e8d820" font-size="16" text-anchor="start" >自</text>
<text x="1124" y="433.5" fill="#ffffff" font-size="16" text-anchor="start" >交</text>
<text x="1122.6" y="452.2" fill="#ffffff" font-size="14.5" text-anchor="start" font-weight="bold">1</text>
<text x="1122.6" y="470.25" fill="#ffffff" font-size="14.5" text-anchor="start" font-weight="bold">1</text>
<text x="1122.6" y="488.3" fill="#ffffff" font-size="14.5" text-anchor="start" font-weight="bold">1</text>
<text x="1122.6" y="506.35" fill="#ffffff" font-size="14.5" text-anchor="start" font-weight="bold">1</text>
<text x="1122.6" y="524.4" fill="#ffffff" font-size="14.5" text-anchor="start" font-weight="bold">1</text>
<text x="1122.6" y="542.45" fill="#ffffff" font-size="14.5" text-anchor="start" font-weight="bold">1</text>
<text x="1122.6" y="560.5" fill="#ffffff" font-size="14.5" text-anchor="start" font-weight="bold">1</text>
<text x="1122.6" y="578.55" fill="#ffffff" font-size="14.5" text-anchor="start" font-weight="bold">1</text>
<text x="1122.6" y="596.6" fill="#ffffff" font-size="14.5" text-anchor="start" font-weight="bold">1</text>
</g>
<rect x="971" y="600" width="159" height="50" fill="#3c3737" shape-rendering="crispEdges"/>
<text x="1051" y="622" fill="#ffffff" font-size="18" text-anchor="middle" font-weight="bold">指标公式网</text>
<text x="1053.1" y="641" fill="#ffffff" font-size="14.8" text-anchor="middle" style="font-family:&quot;DejaVu Sans&quot;,sans-serif">www.zbgs3.com</text>
</svg></body></html>
